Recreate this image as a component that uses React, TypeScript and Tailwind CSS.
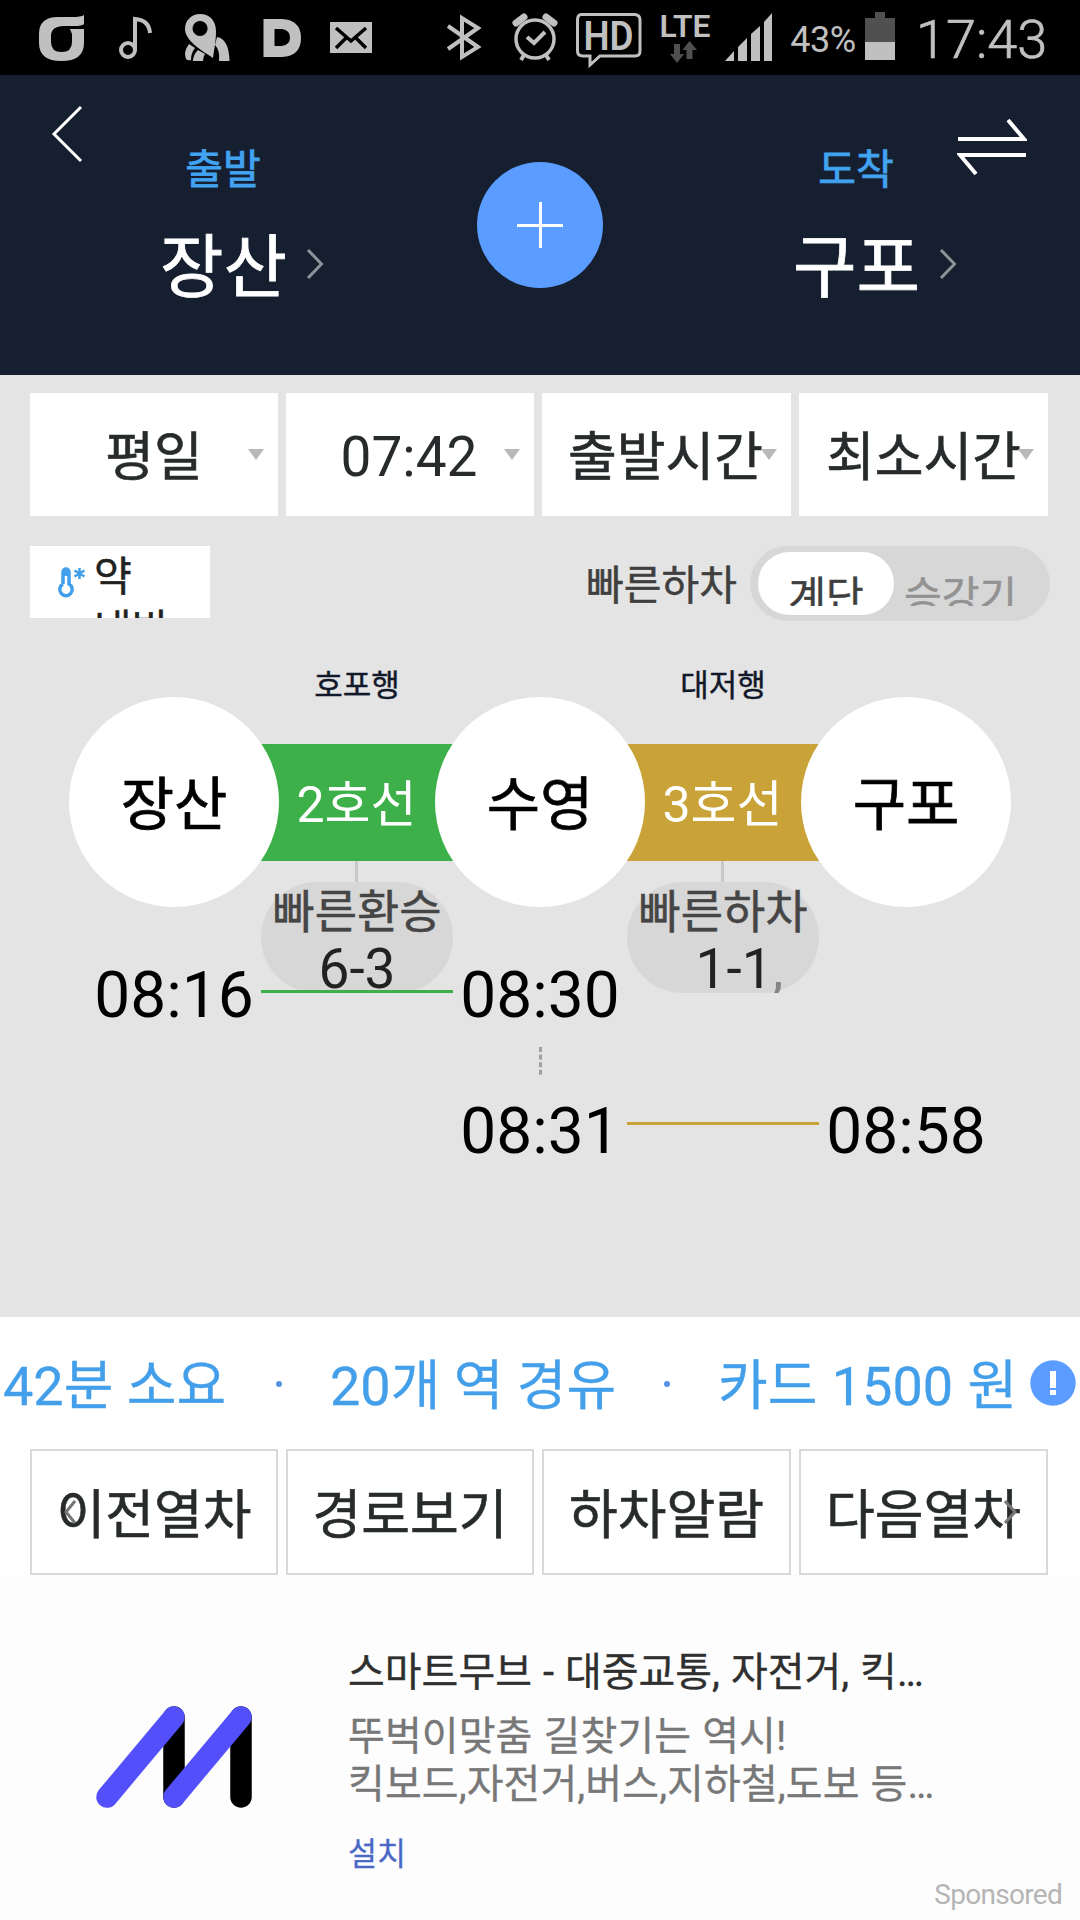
import { ReactNode } from "react";

interface SegmentProps {
	direction: string;
	line: string;
	bandClass: string;
	hint: string;
	children: ReactNode;
}

const filters = [
	{ label: "평일", textClass: "pt-[7px] text-[53px] [-webkit-text-stroke:0.6px]" },
	{ label: "07:42", textClass: "pt-[4px] pr-[2px] text-[55px]" },
	{ label: "출발시간", textClass: "pt-[7px] pr-[2px] text-[53px] [-webkit-text-stroke:0.6px]" },
	{ label: "최소시간", textClass: "pt-[7px] text-[53px] [-webkit-text-stroke:0.6px]" },
];

function StatusBar() {
	return (
		<div className="h-[75px] bg-black text-[#c0c0c0]">
			<div className="grid h-full grid-cols-[785px_76px_54px_165px]">
				<svg className="h-[75px] w-[785px]" viewBox="0 0 785 75" fill="currentColor">
					{/* Notification icons */}
					<path
						fillRule="evenodd"
						d="M84 15V24Q82 26 74 26H64Q51 26 51 36V42Q51 52 61.500 52Q72 52 72 42V34L70 29H84V43Q84 61 61.500 61Q39 61 39 43V34Q39 17 58 17H72Q81 17 84 15Z"
					/>
					<circle cx="128" cy="50" r="7" fill="none" stroke="currentColor" strokeWidth="4" />
					<path d="M135 50V19Q149 20 150 33" fill="none" stroke="currentColor" strokeWidth="4" />
					<path d="M217 37Q229 39 229.500 61H219Q220 50 215 45Z" />
					<path d="M189 44Q183 52 186 59Q188 61 191 60Q191 53 195 48ZM198 50Q193 55 193 61H203Q203 57 205 54Z" />
					<path
						fillRule="evenodd"
						d="M200 14C210 14 216 21 216 31C216 42 214 50 213 58C206 53 185 42 185 29C185 20 192 14 200 14ZM200 21A7.500 7.500 0 1 0 200.100 21Z"
					/>
					<path
						fillRule="evenodd"
						d="M263.500 19H282Q301 20 301 38Q301 56 282 57H263.500ZM274.500 29V46H282Q290 45 290 37.500Q290 30 282 29Z"
					/>
					<path d="M330 22H372V53H330Z" />
					<path d="M336 28L351 41L366 28M336 48L346 38M366 48L356 38" fill="none" stroke="black" strokeWidth="3.500" />
					{/* System icons */}
					<path d="M448 26L478 47L462 57V18L478 28L448 49" fill="none" stroke="currentColor" strokeWidth="4" />
					<circle cx="535" cy="39" r="19" fill="none" stroke="currentColor" strokeWidth="3.500" />
					<path d="M527 37L534 43L545 32" fill="none" stroke="currentColor" strokeWidth="4" />
					<path d="M516 23L524 17M546 17L554 23" fill="none" stroke="currentColor" strokeWidth="7" strokeLinecap="round" />
					<path d="M524 55L521 60M546 55L549 60" fill="none" stroke="currentColor" strokeWidth="4" />
					<path
						d="M581 14.500H635Q640 15 640 20V51Q640 56 635 56H600L590 65V56H583Q577.500 56 577.500 51V20Q577.500 15 581 14.500Z"
						fill="none"
						stroke="currentColor"
						strokeWidth="3"
					/>
					<text x="608.500" y="49.500" textAnchor="middle" textLength="50" lengthAdjust="spacingAndGlyphs" fontFamily="Roboto" fontWeight="600" fontSize="40">
						HD
					</text>
					<text x="685" y="37" textAnchor="middle" textLength="51" lengthAdjust="spacingAndGlyphs" fontFamily="Roboto" fontWeight="600" fontSize="32">
						LTE
					</text>
					<path d="M674 44H680V54H684L677 63L670 54H674ZM686.500 59V50H682.500L689.500 41L697 50H692.500V59Z" fill="#505050" />
					<path d="M725 61L734 51V61ZM738 61V47L747 38V61ZM751 61V34L760 26V61ZM764 61V22L772 13V61Z" />
				</svg>
				<div className="pt-[20px] text-center text-[36px] leading-[40px] tracking-[-0.500px]">43%</div>
				<svg className="h-[75px] w-[54px]" viewBox="0 0 54 75">
					<path d="M4 18H14V12H24V18H34V60H4Z" fill="#505050" />
					<path d="M4 42H34V60H4Z" fill="#c0c0c0" />
				</svg>
				<div className="pt-[9px] pl-px text-[54px] leading-[62px] font-light [-webkit-text-stroke:0.7px]">17:43</div>
			</div>
		</div>
	);
}

function Endpoint({ label, station }: { label: string; station: string }) {
	return (
		<div className="col-start-1 row-start-1 pt-[67px] [-webkit-text-stroke:0.8px]">
			<div className="pr-px text-center text-[41px] leading-[56px] text-[#41a3f2]">{label}</div>
			<div className="mt-[31px] flex items-center justify-center gap-[19px] pl-[37px] leading-[80px] text-white">
				<span className="text-[69px]">{station}</span>
				<svg className="mb-[11px] h-[30px] w-[18px]" viewBox="0 0 18 30">
					<path d="M2 1L15.500 15L2 29" fill="none" stroke="#8d9198" strokeWidth="3" />
				</svg>
			</div>
		</div>
	);
}

function Header() {
	return (
		<header className="grid h-[300px] grid-cols-[447px_186px_447px] bg-[#161f2f]">
			<div className="grid">
				<Endpoint label="출발" station="장산" />
				<svg className="col-start-1 row-start-1 mt-[29px] ml-[50px] h-[60px] w-[34px]" viewBox="0 0 34 60">
					<path d="M31 3L4 30L31 57" fill="none" stroke="white" strokeWidth="3" />
				</svg>
			</div>
			<div className="flex justify-center pt-[87px]">
				<button className="flex h-[126px] w-[126px] items-center justify-center rounded-full bg-[#5a9cff]">
					<svg className="h-[46px] w-[46px]" viewBox="0 0 46 46">
						<path d="M0 23.500H46M23.500 0V46" stroke="white" strokeWidth="3" />
					</svg>
				</button>
			</div>
			<div className="grid">
				<Endpoint label="도착" station="구포" />
				<svg className="col-start-1 row-start-1 mt-[40px] ml-[324px] h-[64px] w-[70px]" viewBox="0 0 70 64">
					<path d="M1 24H67L51 5M69 40H3L19 59" fill="none" stroke="white" strokeWidth="4" />
				</svg>
			</div>
		</header>
	);
}

function Segment({ direction, line, bandClass, hint, children }: SegmentProps) {
	return (
		<div className="-mx-[18px] pt-[45px] text-center">
			<div className="text-[31px] leading-[40px] text-[#11182a] [-webkit-text-stroke:0.4px]">{direction}</div>
			<div className={`mt-[38px] h-[117px] pr-px text-[50px] leading-[122px] text-white ${bandClass}`}>{line}</div>
			<div className="ml-[94px] h-[21px] w-[3px] bg-[#c8c8c8]" />
			<div className="h-[111px] rounded-full bg-[#d7d7d7] pt-[3px]">
				<div className="text-[46px] leading-[54px] whitespace-nowrap text-[#454545] [-webkit-text-stroke:0.5px]">{hint}</div>
				<div className="h-[54px] overflow-hidden text-[55px] leading-[60px] text-[#222]">{children}</div>
			</div>
		</div>
	);
}

function Station({ name, children }: { name: string; children: ReactNode }) {
	return (
		<div className="z-10 pt-[76px] text-center text-[64px] leading-[64px] text-black">
			<div className="mb-[57px] h-[210px] rounded-full bg-white text-[58px] leading-[216px] [-webkit-text-stroke:0.7px]">{name}</div>
			{children}
		</div>
	);
}

function RouteMap() {
	return (
		<div className="grid grid-cols-[210px_156px_210px_156px_210px] pl-[69px]">
			<Station name="장산">08:16</Station>
			<div>
				<Segment direction="호포행" line="2호선" bandClass="bg-[#3eb049]" hint="빠른환승">
					6-3
				</Segment>
				<div className="-mx-[18px] -mt-[3px] h-[3px] bg-[#3eb049]" />
			</div>
			<Station name="수영">
				<div>08:30</div>
				<svg className="mx-auto mt-[19px] h-[29px] w-[3px]" viewBox="0 0 3 29">
					<path d="M1.500 0V28" stroke="#a0a0a0" strokeWidth="3" strokeDasharray="5 2.600" />
				</svg>
				<div className="mt-[24px]">08:31</div>
			</Station>
			<div>
				<Segment direction="대저행" line="3호선" bandClass="bg-[#c9a337]" hint="빠른하차">
					<span className="pl-[33px]">1-1</span>
					<span className="text-[55px] text-[#858585]">,</span>
				</Segment>
				<div className="-mx-[18px] mt-[129px] h-[3px] bg-[#c9a337]" />
			</div>
			<Station name="구포">
				<div className="mt-[193px]">08:58</div>
			</Station>
		</div>
	);
}

function Options() {
	return (
		<div className="flex h-[75px] pl-[30px] [-webkit-text-stroke:0.5px]">
			<div className="flex h-[72px] w-[180px] overflow-hidden bg-white pl-[26px]">
				<svg className="mt-[20px] h-[32px] w-[30px] text-[#419fec]" viewBox="0 0 30 32">
					<path
						d="M7 18V6a3 3 0 0 1 6 0v12a6.200 6.200 0 1 1 -6 0"
						fill="none"
						stroke="currentColor"
						strokeWidth="3.500"
					/>
					<path d="M6 4H14V10H6Z" fill="currentColor" />
					<path d="M23.500 2V13M18.500 4.500L28.500 10.500M28.500 4.500L18.500 10.500" stroke="currentColor" strokeWidth="2.500" />
				</svg>
				<div className="w-[110px] pt-[5px] pl-[8px] text-[41px] leading-[53px] text-[#222]">
					약
					<br />
					냉방
				</div>
			</div>
			<div className="ml-[376px] w-[164px] text-[41px] leading-[80px] text-[#3f3f3f]">빠른하차</div>
			<div className="flex h-[75px] w-[300px] items-center rounded-full bg-[#d7d7d7] pl-[8px] text-[41px]">
				<div className="h-[63px] w-[136px] rounded-full bg-white text-center text-[#3f3f3f]">
					<div className="h-[54px] overflow-hidden leading-[91px]">계단</div>
				</div>
				<div className="h-[63px] w-[133px] text-center text-[#929292]">
					<div className="h-[54px] overflow-hidden leading-[91px]">승강기</div>
				</div>
			</div>
		</div>
	);
}

function Summary() {
	return (
		<div className="flex h-[132px] items-center pt-[7px] pl-[3px] text-[54px] leading-[60px] whitespace-nowrap text-[#439fea] [-webkit-text-stroke:0.3px]">
			<div className="w-[273px]">42분 소요</div>
			<div className="-mt-[5px] h-[6px] w-[6px] rounded-full bg-[#5793e6]" />
			<div className="ml-[48px] w-[334px]">20개 역 경유</div>
			<div className="-mt-[5px] h-[6px] w-[6px] rounded-full bg-[#5793e6]" />
			<div className="ml-[48px] w-[312px] [word-spacing:1px]">카드 1500 원</div>
			<svg className="-mt-[7px] h-[46px] w-[46px]" viewBox="0 0 46 46">
				<circle cx="23" cy="23" r="22.700" fill="#5a9cff" />
				<path d="M20 11H26V28H20ZM20 30H26V35H20Z" fill="white" />
			</svg>
		</div>
	);
}

function TrainButton({ label, arrow }: { label: string; arrow?: "prev" | "next" }) {
	return (
		<button className="grid h-[126px] border-2 border-[#d9d9d9] text-[53px] text-[#272b2c] [-webkit-text-stroke:0.6px]">
			<span className="col-start-1 row-start-1 self-center pt-[7px] leading-[60px] whitespace-nowrap">{label}</span>
			{arrow === "prev" && (
				<svg className="col-start-1 row-start-1 ml-[32px] h-[24px] w-[12px] self-center" viewBox="0 0 12 24">
					<path d="M11 1L2 12L11 23" fill="none" stroke="#777" strokeWidth="3" />
				</svg>
			)}
			{arrow === "next" && (
				<svg className="col-start-1 row-start-1 mr-[28px] h-[24px] w-[14px] self-center justify-self-end" viewBox="0 0 14 24">
					<path d="M1 1L11 12L1 23" fill="none" stroke="#777" strokeWidth="3" />
				</svg>
			)}
		</button>
	);
}

function Ad() {
	return (
		<div className="flex h-[345px] bg-[#fdfdfd]">
			<svg className="mt-[130px] ml-[94px] h-[106px] w-[160px]" viewBox="94 1705 160 106">
				<g fill="none" strokeWidth="21.500" strokeLinecap="round">
					<path d="M174 1717V1797M241 1717V1797" stroke="black" />
					<path d="M107 1797L174 1717M174 1797L241 1717" stroke="#534ffb" />
				</g>
			</svg>
			<div className="ml-[94px] flex w-[714px] flex-col pt-[74px] text-[40px] leading-[48px] whitespace-nowrap [-webkit-text-stroke:0.3px]">
				<div className="[word-spacing:1px] text-[#2f2f2f]">스마트무브 - 대중교통, 자전거, 킥…</div>
				<div className="mt-[16px] tracking-[0.1px] [word-spacing:1px] text-[#777]">
					뚜벅이맞춤 길찾기는 역시!
					<br />
					킥보드,자전거,버스,지하철,도보 등…
				</div>
				<div className="mt-[24px] text-[31.500px] leading-[44px] text-[#4a69c6]">설치</div>
				<div className="text-right text-[28px] leading-[36px] tracking-[-0.700px] text-[#b5b5b5] [-webkit-text-stroke:0px]">
					Sponsored
				</div>
			</div>
		</div>
	);
}

export default function App() {
	return (
		<div className="h-[1920px] w-[1080px] overflow-hidden bg-white font-[Roboto,'Noto_Sans_CJK_KR',sans-serif]">
			<StatusBar />
			<Header />
			<main className="h-[942px] bg-[#e4e4e4] pt-[18px]">
				<div className="mb-[30px] grid grid-cols-[248px_248px_249px_249px] gap-2 pl-[30px]">
					{filters.map(({ label, textClass }) => (
						<button key={label} className="grid h-[123px] items-center bg-white text-[#272b2c]">
							<span className={`col-start-1 row-start-1 leading-[60px] whitespace-nowrap ${textClass}`}>{label}</span>
							<svg className="col-start-1 row-start-1 mr-[14px] h-[11px] w-[16px] justify-self-end" viewBox="0 0 16 11">
								<path d="M0 0H16L8 11Z" fill="#b9b9b9" />
							</svg>
						</button>
					))}
				</div>
				<Options />
				<RouteMap />
			</main>
			<Summary />
			<div className="grid grid-cols-[248px_248px_249px_249px] gap-2 pl-[30px]">
				<TrainButton label="이전열차" arrow="prev" />
				<TrainButton label="경로보기" />
				<TrainButton label="하차알람" />
				<TrainButton label="다음열차" arrow="next" />
			</div>
			<Ad />
		</div>
	);
}
